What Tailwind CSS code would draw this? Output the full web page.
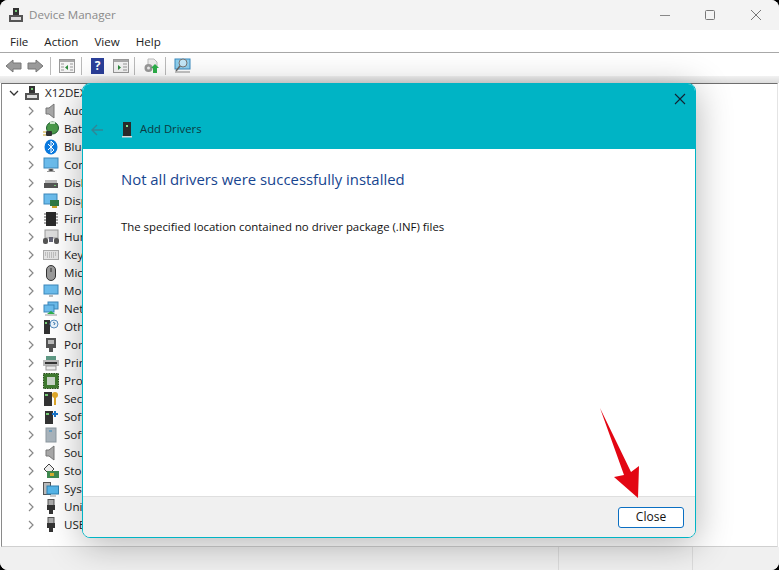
<!DOCTYPE html>
<html>
<head>
<meta charset="utf-8">
<script src="https://cdn.jsdelivr.net/npm/@tailwindcss/browser@4"></script>
</head>
<body class="bg-black overflow-hidden">
<div class="relative w-[779px] h-[570px] bg-white rounded-lg overflow-hidden font-['Open_Sans','Noto_Sans',sans-serif] text-[11.5px] text-[#111]">
  <!-- title bar -->
  <div class="h-[30px] bg-[#f3f3f3] flex items-center">
    <svg class="ml-[8px] w-[16px] h-[16px]" viewBox="0 0 16 16"><rect x="5" y="1" width="6" height="7" fill="#333"/><rect x="7" y="3" width="2" height="2" fill="#7c7"/><rect x="1" y="8" width="14" height="7" fill="#555"/><rect x="3" y="10" width="10" height="3" fill="#ddd"/></svg>
    <span class="ml-[5px] text-[#8a8a8a] text-[11.6px]">Device Manager</span>
    <div class="ml-auto flex items-center text-[#777]">
      <svg class="w-[12px] h-[12px] mr-[33px]" viewBox="0 0 12 12"><path d="M1 6.500H11" stroke="#888" fill="none"/></svg>
      <svg class="w-[12px] h-[12px] mr-[34px]" viewBox="0 0 12 12"><rect x="1.500" y="1.500" width="9" height="9" rx="1" stroke="#777" fill="none"/></svg>
      <svg class="w-[12px] h-[12px] mr-[17px]" viewBox="0 0 12 12"><path d="M1 1L11 11M11 1L1 11" stroke="#777" fill="none"/></svg>
    </div>
  </div>
  <!-- menu -->
  <div class="h-[23px] bg-white border-b border-[#a8a8a8] flex items-center pl-[10px] pt-[1px] gap-[16px] text-[11.6px] text-[#222]">
    <span>File</span><span>Action</span><span>View</span><span>Help</span>
  </div>
  <!-- toolbar -->
  <div class="h-[23px] bg-white flex items-center pl-[5px] pt-[2px]">
    <svg class="w-[17px] h-[14px]" viewBox="0 0 17 14"><path d="M1 7L8 1V4H16V10H8V13Z" fill="#9a9a9a" stroke="#777"/></svg>
    <svg class="w-[17px] h-[14px] ml-[5px]" viewBox="0 0 17 14"><path d="M16 7L9 1V4H1V10H9V13Z" fill="#9a9a9a" stroke="#777"/></svg>
    <div class="w-px h-[18px] bg-[#bbb] ml-[6px]"></div>
    <svg class="w-[16px] h-[14px] ml-[8px]" viewBox="0 0 16 14"><rect x=".5" y=".5" width="15" height="13" fill="#f4f4f4" stroke="#999"/><rect x="1" y="1" width="14" height="2" fill="#aaa"/><path d="M9 6V11L6 8.500Z" fill="#2a8a3a"/><path d="M2 5H5M2 8H5M2 11H5M11 5H14M11 8H14M11 11H14" stroke="#999"/></svg>
    <div class="w-px h-[18px] bg-[#bbb] ml-[6px]"></div>
    <div class="w-[13px] h-[16px] ml-[9px] bg-[#2b3f9a] text-white text-[12px] font-bold flex items-center justify-center leading-none">?</div>
    <svg class="w-[16px] h-[14px] ml-[9px]" viewBox="0 0 16 14"><rect x=".5" y=".5" width="15" height="13" fill="#f4f4f4" stroke="#999"/><rect x="1" y="1" width="14" height="2" fill="#aaa"/><path d="M5 6V11L8 8.500Z" fill="#2a8a3a"/><path d="M10 5H14M10 8H14M10 11H14" stroke="#999"/></svg>
    <div class="w-px h-[18px] bg-[#bbb] ml-[5px]"></div>
    <svg class="w-[16px] h-[16px] ml-[8px]" viewBox="0 0 16 16"><path d="M5 1H11L14 4V10H5Z" fill="#eee" stroke="#bbb"/><circle cx="5.500" cy="10" r="4" fill="#999"/><circle cx="5.500" cy="10" r="1.500" fill="#eee"/><path d="M12 6L16 10H14V15H10V10H8Z" fill="#2db04a"/></svg>
    <div class="w-px h-[18px] bg-[#bbb] ml-[6px]"></div>
    <svg class="w-[17px] h-[16px] ml-[8px]" viewBox="0 0 17 16"><rect x="1" y="1" width="15" height="10" fill="#8fd0ee" stroke="#3a8bc0"/><circle cx="9" cy="5" r="4" fill="#c4e8f8" stroke="#777"/><path d="M6 8L2 13" stroke="#666" stroke-width="1.500"/><path d="M1 14H16" stroke="#888"/></svg>
  </div>
  <div class="h-[7px] bg-gradient-to-b from-[#f2f2f2] to-[#dcdcdc]"></div>

  <!-- tree -->
  <div class="relative h-[464px] ml-[1px] mr-[1px] border-l border-t border-r border-b border-l-[#8a8a8a] border-t-[#6e6e6e] border-r-[#e4e4e4] border-b-[#d0d0d0] bg-white">
    <div class="flex flex-col text-[11.6px] leading-[18px] text-[#222] whitespace-nowrap">
      <div class="h-[18px] flex items-center">
        <svg class="ml-[7px] w-[10px] h-[10px]" viewBox="0 0 10 10"><path d="M1 3L5 7L9 3" stroke="#333" stroke-width="1.300" fill="none"/></svg>
        <svg class="ml-[5px] w-[16px] h-[16px]" viewBox="0 0 16 16"><rect x="5" y="1" width="6" height="7" fill="#333"/><rect x="7" y="3" width="2" height="2" fill="#7c7"/><rect x="1" y="8" width="14" height="7" fill="#555"/><rect x="3" y="10" width="10" height="3" fill="#ddd"/></svg>
        <span class="ml-[5px]">X12DEX</span>
      </div>
      <!-- rows -->
      <div class="h-[18px] flex items-center"><svg class="ml-[25px] w-[8px] h-[10px]" viewBox="0 0 8 10"><path d="M2 1L6 5L2 9" stroke="#888" stroke-width="1.200" fill="none"/></svg><svg class="ml-[8px] w-[16px] h-[16px]" viewBox="0 0 16 16"><path d="M3 5H6L11 1V15L6 11H3Z" fill="#a8a8a8" stroke="#777"/></svg><span class="ml-[5px]">Audio</span></div>
      <div class="h-[18px] flex items-center"><svg class="ml-[25px] w-[8px] h-[10px]" viewBox="0 0 8 10"><path d="M2 1L6 5L2 9" stroke="#888" stroke-width="1.200" fill="none"/></svg><svg class="ml-[8px] w-[16px] h-[16px]" viewBox="0 0 16 16"><ellipse cx="9.500" cy="7" rx="6" ry="6" fill="#4a9a4a" stroke="#1f5f2f"/><rect x="7" y="1" width="5" height="2" fill="#cfe8cf"/><rect x="3" y="10" width="6" height="5" rx="1" fill="#333"/><path d="M0 11H3M0 14H3" stroke="#c9a227"/></svg><span class="ml-[5px]">Batteries</span></div>
      <div class="h-[18px] flex items-center"><svg class="ml-[25px] w-[8px] h-[10px]" viewBox="0 0 8 10"><path d="M2 1L6 5L2 9" stroke="#888" stroke-width="1.200" fill="none"/></svg><svg class="ml-[8px] w-[16px] h-[16px]" viewBox="0 0 16 16"><ellipse cx="8" cy="8" rx="6.500" ry="7.500" fill="#0a7ae0"/><path d="M5 5L11 11L8 14V2L11 5L5 11" stroke="#fff" fill="none"/></svg><span class="ml-[5px]">Bluetooth</span></div>
      <div class="h-[18px] flex items-center"><svg class="ml-[25px] w-[8px] h-[10px]" viewBox="0 0 8 10"><path d="M2 1L6 5L2 9" stroke="#888" stroke-width="1.200" fill="none"/></svg><svg class="ml-[8px] w-[16px] h-[16px]" viewBox="0 0 16 16"><rect x="1" y="1" width="14" height="10" fill="#6bbcec" stroke="#3d88bb"/><path d="M6 12H10V14H6ZM4 14.500H12" stroke="#999"/></svg><span class="ml-[5px]">Computer</span></div>
      <div class="h-[18px] flex items-center"><svg class="ml-[25px] w-[8px] h-[10px]" viewBox="0 0 8 10"><path d="M2 1L6 5L2 9" stroke="#888" stroke-width="1.200" fill="none"/></svg><svg class="ml-[8px] w-[16px] h-[16px]" viewBox="0 0 16 16"><rect x="2" y="5" width="12" height="3" fill="#bbb"/><rect x="1" y="8" width="14" height="5" fill="#555"/><rect x="11" y="10" width="2" height="1" fill="#7c7"/></svg><span class="ml-[5px]">Disk</span></div>
      <div class="h-[18px] flex items-center"><svg class="ml-[25px] w-[8px] h-[10px]" viewBox="0 0 8 10"><path d="M2 1L6 5L2 9" stroke="#888" stroke-width="1.200" fill="none"/></svg><svg class="ml-[8px] w-[16px] h-[16px]" viewBox="0 0 16 16"><rect x="1" y="1" width="13" height="10" fill="#6bbcec" stroke="#3d88bb"/><rect x="7" y="7" width="9" height="6" fill="#2f7a45"/><rect x="9" y="13" width="5" height="2" fill="#c9a227"/></svg><span class="ml-[5px]">Display</span></div>
      <div class="h-[18px] flex items-center"><svg class="ml-[25px] w-[8px] h-[10px]" viewBox="0 0 8 10"><path d="M2 1L6 5L2 9" stroke="#888" stroke-width="1.200" fill="none"/></svg><svg class="ml-[8px] w-[16px] h-[16px]" viewBox="0 0 16 16"><rect x="3" y="1" width="10" height="14" fill="#2a2a2a"/><path d="M1 3H3M1 6H3M1 9H3M1 12H3M13 3H15M13 6H15M13 9H15M13 12H15" stroke="#555"/></svg><span class="ml-[5px]">Firmware</span></div>
      <div class="h-[18px] flex items-center"><svg class="ml-[25px] w-[8px] h-[10px]" viewBox="0 0 8 10"><path d="M2 1L6 5L2 9" stroke="#888" stroke-width="1.200" fill="none"/></svg><svg class="ml-[8px] w-[16px] h-[16px]" viewBox="0 0 16 16"><rect x="2" y="1" width="13" height="8" fill="#ddd" stroke="#999"/><rect x="0" y="9" width="5" height="6" rx="2" fill="#555"/><rect x="11" y="9" width="5" height="6" rx="2" fill="#555"/><rect x="6" y="8" width="4" height="5" fill="#667"/></svg><span class="ml-[5px]">Human</span></div>
      <div class="h-[18px] flex items-center"><svg class="ml-[25px] w-[8px] h-[10px]" viewBox="0 0 8 10"><path d="M2 1L6 5L2 9" stroke="#888" stroke-width="1.200" fill="none"/></svg><svg class="ml-[8px] w-[16px] h-[16px]" viewBox="0 0 16 16"><rect x="0.500" y="3.500" width="15" height="9" fill="#e4e4e4" stroke="#aaa"/><path d="M2 6H14M2 8H14M4 10H12" stroke="#999" stroke-dasharray="1 1"/></svg><span class="ml-[5px]">Keyboards</span></div>
      <div class="h-[18px] flex items-center"><svg class="ml-[25px] w-[8px] h-[10px]" viewBox="0 0 8 10"><path d="M2 1L6 5L2 9" stroke="#888" stroke-width="1.200" fill="none"/></svg><svg class="ml-[8px] w-[16px] h-[16px]" viewBox="0 0 16 16"><rect x="3.500" y="0.500" width="9" height="15" rx="4.500" fill="#9a9a9a" stroke="#333"/><path d="M8 3V7" stroke="#333"/></svg><span class="ml-[5px]">Mice</span></div>
      <div class="h-[18px] flex items-center"><svg class="ml-[25px] w-[8px] h-[10px]" viewBox="0 0 8 10"><path d="M2 1L6 5L2 9" stroke="#888" stroke-width="1.200" fill="none"/></svg><svg class="ml-[8px] w-[16px] h-[16px]" viewBox="0 0 16 16"><rect x="1" y="2" width="14" height="9" fill="#6bbcec" stroke="#3d88bb"/><path d="M6 12H10V14H6Z" fill="#bbb"/></svg><span class="ml-[5px]">Monitors</span></div>
      <div class="h-[18px] flex items-center"><svg class="ml-[25px] w-[8px] h-[10px]" viewBox="0 0 8 10"><path d="M2 1L6 5L2 9" stroke="#888" stroke-width="1.200" fill="none"/></svg><svg class="ml-[8px] w-[16px] h-[16px]" viewBox="0 0 16 16"><rect x="5" y="1" width="10" height="7" fill="#6bbcec" stroke="#3d88bb"/><rect x="1" y="4" width="10" height="7" fill="#6bbcec" stroke="#3d88bb"/><path d="M2 14H14" stroke="#ccc" stroke-width="2"/><path d="M4 13H12L8 10Z" fill="#2db04a"/></svg><span class="ml-[5px]">Network</span></div>
      <div class="h-[18px] flex items-center"><svg class="ml-[25px] w-[8px] h-[10px]" viewBox="0 0 8 10"><path d="M2 1L6 5L2 9" stroke="#888" stroke-width="1.200" fill="none"/></svg><svg class="ml-[8px] w-[16px] h-[16px]" viewBox="0 0 16 16"><rect x="1" y="1" width="6" height="14" fill="#333"/><rect x="2" y="3" width="2" height="2" fill="#7c7"/><circle cx="11" cy="5" r="4" fill="#eaf3fb" stroke="#5a8fc0"/><path d="M10 4A1 1 0 1 1 11 5.500V6" stroke="#3a7ab0" fill="none"/></svg><span class="ml-[5px]">Other</span></div>
      <div class="h-[18px] flex items-center"><svg class="ml-[25px] w-[8px] h-[10px]" viewBox="0 0 8 10"><path d="M2 1L6 5L2 9" stroke="#888" stroke-width="1.200" fill="none"/></svg><svg class="ml-[8px] w-[16px] h-[16px]" viewBox="0 0 16 16"><path d="M3 1H13V11H10V15H6V11H3Z" fill="#555"/><rect x="5" y="3" width="6" height="4" fill="#bbb"/></svg><span class="ml-[5px]">Ports</span></div>
      <div class="h-[18px] flex items-center"><svg class="ml-[25px] w-[8px] h-[10px]" viewBox="0 0 8 10"><path d="M2 1L6 5L2 9" stroke="#888" stroke-width="1.200" fill="none"/></svg><svg class="ml-[8px] w-[16px] h-[16px]" viewBox="0 0 16 16"><rect x="3" y="1" width="10" height="4" fill="#5f9a85"/><rect x="0" y="5" width="16" height="6" fill="#bbb"/><rect x="2" y="7" width="12" height="2" fill="#333"/><rect x="3" y="11" width="10" height="4" fill="#eee" stroke="#999"/></svg><span class="ml-[5px]">Print</span></div>
      <div class="h-[18px] flex items-center"><svg class="ml-[25px] w-[8px] h-[10px]" viewBox="0 0 8 10"><path d="M2 1L6 5L2 9" stroke="#888" stroke-width="1.200" fill="none"/></svg><svg class="ml-[8px] w-[16px] h-[16px]" viewBox="0 0 16 16"><rect x="0.500" y="0.500" width="15" height="15" fill="#3f7a2f" stroke="#2b4f1f" stroke-dasharray="1.500 1"/><rect x="4" y="4" width="8" height="8" fill="#c8d4c8"/></svg><span class="ml-[5px]">Proc</span></div>
      <div class="h-[18px] flex items-center"><svg class="ml-[25px] w-[8px] h-[10px]" viewBox="0 0 8 10"><path d="M2 1L6 5L2 9" stroke="#888" stroke-width="1.200" fill="none"/></svg><svg class="ml-[8px] w-[16px] h-[16px]" viewBox="0 0 16 16"><rect x="1" y="1" width="8" height="14" fill="#333"/><rect x="2" y="3" width="3" height="2" fill="#7c7"/><circle cx="12" cy="4" r="3" fill="#e0a92a"/><path d="M12 6V14" stroke="#e0a92a" stroke-width="2"/></svg><span class="ml-[5px]">Secu</span></div>
      <div class="h-[18px] flex items-center"><svg class="ml-[25px] w-[8px] h-[10px]" viewBox="0 0 8 10"><path d="M2 1L6 5L2 9" stroke="#888" stroke-width="1.200" fill="none"/></svg><svg class="ml-[8px] w-[16px] h-[16px]" viewBox="0 0 16 16"><rect x="2" y="2" width="8" height="13" fill="#333"/><rect x="3" y="4" width="3" height="2" fill="#7c7"/><path d="M9 4H11V2H13V4H15V6H13V8H11V6H9Z" fill="#1a74c8"/></svg><span class="ml-[5px]">Soft</span></div>
      <div class="h-[18px] flex items-center"><svg class="ml-[25px] w-[8px] h-[10px]" viewBox="0 0 8 10"><path d="M2 1L6 5L2 9" stroke="#888" stroke-width="1.200" fill="none"/></svg><svg class="ml-[8px] w-[16px] h-[16px]" viewBox="0 0 16 16"><rect x="3" y="1" width="10" height="14" fill="#a9b4bc" stroke="#8d98a0"/><rect x="6" y="3" width="3" height="2" fill="#6a9fc0"/></svg><span class="ml-[5px]">Soft</span></div>
      <div class="h-[18px] flex items-center"><svg class="ml-[25px] w-[8px] h-[10px]" viewBox="0 0 8 10"><path d="M2 1L6 5L2 9" stroke="#888" stroke-width="1.200" fill="none"/></svg><svg class="ml-[8px] w-[16px] h-[16px]" viewBox="0 0 16 16"><path d="M3 5H6L11 1V15L6 11H3Z" fill="#a8a8a8" stroke="#777"/></svg><span class="ml-[5px]">Soun</span></div>
      <div class="h-[18px] flex items-center"><svg class="ml-[25px] w-[8px] h-[10px]" viewBox="0 0 8 10"><path d="M2 1L6 5L2 9" stroke="#888" stroke-width="1.200" fill="none"/></svg><svg class="ml-[8px] w-[16px] h-[16px]" viewBox="0 0 16 16"><path d="M1 6L6 1L11 6L6 11Z" fill="#eee" stroke="#444"/><rect x="4" y="8" width="12" height="7" fill="#3f8a50"/><rect x="7" y="10" width="4" height="3" fill="#d4b030"/></svg><span class="ml-[5px]">Stor</span></div>
      <div class="h-[18px] flex items-center"><svg class="ml-[25px] w-[8px] h-[10px]" viewBox="0 0 8 10"><path d="M2 1L6 5L2 9" stroke="#888" stroke-width="1.200" fill="none"/></svg><svg class="ml-[8px] w-[16px] h-[16px]" viewBox="0 0 16 16"><rect x="0.500" y="1.500" width="7" height="12" fill="#bbb" stroke="#555"/><rect x="4" y="5" width="11.500" height="8" fill="#55b5e8" stroke="#2f80b0"/><path d="M7 15H13" stroke="#999"/></svg><span class="ml-[5px]">Syst</span></div>
      <div class="h-[18px] flex items-center"><svg class="ml-[25px] w-[8px] h-[10px]" viewBox="0 0 8 10"><path d="M2 1L6 5L2 9" stroke="#888" stroke-width="1.200" fill="none"/></svg><svg class="ml-[8px] w-[16px] h-[16px]" viewBox="0 0 16 16"><rect x="5" y="0.500" width="6" height="6" fill="#aaa" stroke="#555"/><path d="M4 6H12V11H10V15H6V11H4Z" fill="#333"/></svg><span class="ml-[5px]">Univ</span></div>
      <div class="h-[18px] flex items-center"><svg class="ml-[25px] w-[8px] h-[10px]" viewBox="0 0 8 10"><path d="M2 1L6 5L2 9" stroke="#888" stroke-width="1.200" fill="none"/></svg><svg class="ml-[8px] w-[16px] h-[16px]" viewBox="0 0 16 16"><rect x="5" y="0.500" width="6" height="6" fill="#aaa" stroke="#555"/><path d="M4 6H12V11H10V15H6V11H4Z" fill="#333"/></svg><span class="ml-[5px]">USB</span></div>
    </div>
  </div>
  <!-- status bar -->
  <div class="h-[23px] bg-[#f0f0f0] flex justify-end">
    <div class="w-[134px] border-l border-[#dcdcdc] mr-[87px]"></div>
    <div class="absolute left-[692px] bottom-0 h-[23px] border-l border-[#dcdcdc]"></div>
  </div>

  <!-- dialog -->
  <div class="absolute left-[82px] top-[83px] w-[614px] h-[455px] rounded-lg overflow-hidden border border-[#00b4c5] bg-white flex flex-col shadow-[0_6px_36px_rgba(0,0,0,0.3)]">
    <div class="relative h-[65px] bg-[#00b4c5] shrink-0 flex items-center pt-[26px]">
      <svg class="ml-[7px] w-[14px] h-[14px]" viewBox="0 0 14 14"><path d="M13 7H2M7 2L2 7L7 12" stroke="#2f8796" stroke-width="1.400" fill="none"/></svg>
      <svg class="ml-[17px] w-[12px] h-[16px]" viewBox="0 0 12 16"><rect x="2" y="0" width="8" height="14" fill="#2a2a2a"/><rect x="5" y="3" width="2" height="2" fill="#7fe08f"/><rect x="1" y="14" width="10" height="1.500" fill="#d8d8d8"/></svg>
      <span class="ml-[7px] text-[11.3px] text-[#0d3a42]">Add Drivers</span>
      <svg class="absolute right-[9px] top-[9px] w-[12px] h-[12px]" viewBox="0 0 12 12"><path d="M1 1L11 11M11 1L1 11" stroke="#123" stroke-width="1.100" fill="none"/></svg>
    </div>
    <div class="flex-1 bg-white pl-[38px] pt-[18px]">
      <h1 class="text-[14.9px] leading-[24px] text-[#17458f] font-normal">Not all drivers were successfully installed</h1>
      <p class="mt-[27px] text-[11.4px] leading-[18px] text-[#111]">The specified location contained no driver package (.INF) files</p>
    </div>
    <div class="h-[41px] shrink-0 bg-[#f0f0f0] border-t border-[#dfdfdf] flex items-center justify-end pr-[11px]">
      <button class="w-[66px] h-[21px] bg-white border border-[#0b6fc2] rounded-[3px] text-[12px] leading-none text-[#111]">Close</button>
    </div>
  </div>

  <!-- red arrow -->
  <svg class="absolute left-[595px] top-[403px] w-[50px] h-[100px]" viewBox="595 403 50 100"><polygon points="600,408 631,472 639,466 638,498 614,477 624,475" fill="#e30613"/></svg>
</div>
</body>
</html>
